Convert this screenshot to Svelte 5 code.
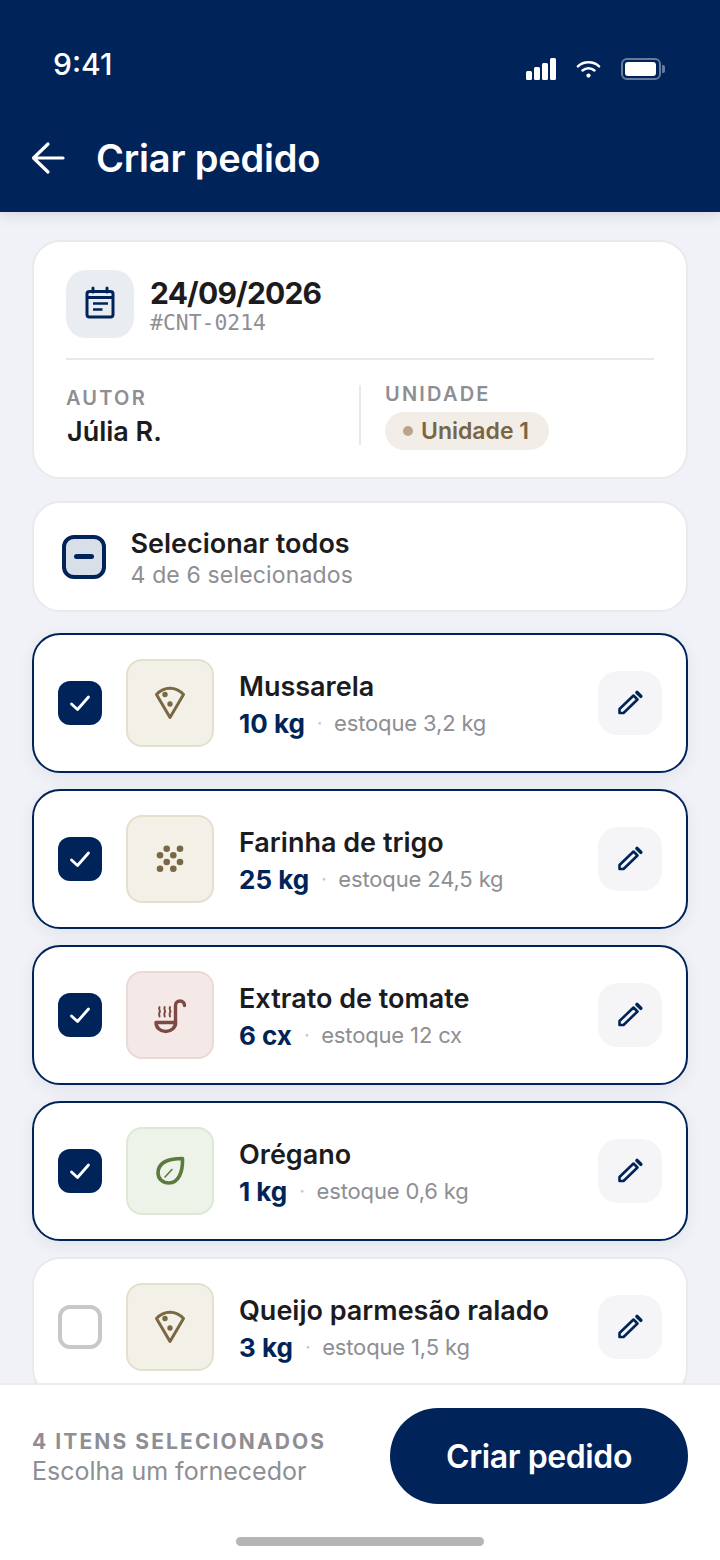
<script>
  const items = [
    { name: "Mussarela", qty: "10 kg", stock: "estoque 3,2 kg", kind: "pizza", tone: "sand", on: true },
    { name: "Farinha de trigo", qty: "25 kg", stock: "estoque 24,5 kg", kind: "grain", tone: "sand", on: true },
    { name: "Extrato de tomate", qty: "6 cx", stock: "estoque 12 cx", kind: "ladle", tone: "rose", on: true },
    { name: "Orégano", qty: "1 kg", stock: "estoque 0,6 kg", kind: "leaf", tone: "green", on: true },
    { name: "Queijo parmesão ralado", qty: "3 kg", stock: "estoque 1,5 kg", kind: "pizza", tone: "sand", on: false },
  ];
  const grains = [
    [40.7, 33.7], [54, 33.7], [34, 40.3], [47.3, 40.3],
    [40.7, 47], [54, 47], [34, 53.7], [47.3, 53.7],
  ];
</script>

<div class="screen">
  <header class="top">
    <div class="status">
      <span class="time">9:41</span>
      <div class="status-icons">
        <svg width="30" height="22" viewBox="0 0 30 22" fill="#fff">
          <rect x="0" y="13" width="6" height="9" rx="1.5" />
          <rect x="8" y="9" width="6" height="13" rx="1.5" />
          <rect x="16" y="5" width="6" height="17" rx="1.5" />
          <rect x="24" y="0" width="6" height="22" rx="1.5" />
        </svg>
        <svg width="25" height="20" viewBox="0 0 26 20" fill="none" stroke="#fff" stroke-width="2.6" stroke-linecap="round">
          <path d="M2 7.2 C8 1.6 18 1.6 24 7.2" />
          <path d="M6.8 11.6 C10.4 8.4 15.6 8.4 19.2 11.6" />
          <circle cx="13" cy="16.8" r="2.2" fill="#fff" stroke="none" />
        </svg>
        <div class="battery"><div class="battery-fill"></div></div>
      </div>
    </div>
    <div class="nav">
      <svg width="34" height="34" viewBox="0 0 34 34" fill="none" stroke="#fff" stroke-width="3.2" stroke-linecap="round" stroke-linejoin="round">
        <path d="M32 17 H3 M17 3 L2.5 17 L17 31" />
      </svg>
      <h1>Criar pedido</h1>
    </div>
  </header>

  <main class="content">
    <section class="card info">
      <div class="info-head">
        <div class="cal">
          <svg width="68" height="68" viewBox="0 0 68 68" fill="none" stroke="#00245a">
            <rect x="21" y="21.5" width="26" height="25.5" rx="2.5" stroke-width="3" />
            <path d="M27 18 V22 M41 18 V22" stroke-width="3" stroke-linecap="round" />
            <path d="M21 27.5 H47" stroke-width="3" />
            <path d="M27 33.5 H42 M27 39.5 H36.5" stroke-width="2.6" />
          </svg>
        </div>
        <div>
          <div class="date">24/09/2026</div>
          <div class="code">#CNT-0214</div>
        </div>
      </div>
      <div class="info-meta">
        <div class="meta-left">
          <div class="label">AUTOR</div>
          <div class="author">Júlia R.</div>
        </div>
        <div class="meta-right">
          <div class="label">UNIDADE</div>
          <div class="pill"><span class="dot"></span>Unidade 1</div>
        </div>
      </div>
    </section>

    <section class="card select-all">
      <div class="check-mixed"><span></span></div>
      <div class="select-text">
        <div class="select-title">Selecionar todos</div>
        <div class="select-sub">4 de 6 selecionados</div>
      </div>
    </section>

    <div class="list">
      {#each items as item}
        <article class="item" class:on={item.on}>
          {#if item.on}
            <div class="check">
              <svg width="44" height="44" viewBox="0 0 44 44" fill="none" stroke="#fff" stroke-width="2.8" stroke-linecap="round" stroke-linejoin="round">
                <path d="M13.5 23 L19.5 28.5 L30.5 16" />
              </svg>
            </div>
          {:else}
            <div class="check-empty"></div>
          {/if}

          <div class="thumb {item.tone}">
            <svg width="84" height="84" viewBox="2 2 84 84" fill="none" stroke="currentColor" stroke-width="3" stroke-linejoin="round" stroke-linecap="round">
              {#if item.kind === "pizza"}
                <path d="M30.5 35.5 C38 27 50 27 57.5 35.5 L44 58.5 Z" />
                <circle cx="39" cy="35.5" r="2.7" fill="currentColor" stroke="none" />
                <circle cx="44" cy="45" r="2.7" fill="currentColor" stroke="none" />
              {:else if item.kind === "grain"}
                {#each grains as g}
                  <circle cx={g[0]} cy={g[1]} r="3.3" fill="currentColor" stroke="none" />
                {/each}
              {:else if item.kind === "ladle"}
                <path d="M49.5 54 V34.5 a4.5 4.5 0 0 1 9 0" stroke-width="3.4" />
                <path d="M30 51.5 H49.5 C49.5 57 45 60.5 39.7 60.5 C34.5 60.5 30 57 30 51.5 Z" stroke-width="3.4" />
                <path d="M33.5 36 c-1.4 2 1.4 3.5 0 5.5 c-1 1.5 0 3 0 4 M38.7 36 c-1.4 2 1.4 3.5 0 5.5 c-1 1.5 0 3 0 4 M44 36 c-1.4 2 1.4 3.5 0 5.5 c-1 1.5 0 3 0 4" stroke-width="2" />
              {:else}
                <path d="M56.5 31.5 C45 31.5 32 34 32 46 C32 52 37 56 43 56 C52 56 57 46 56.5 31.5 Z" stroke-width="3.6" />
                <path d="M39 50 L46 42.5" stroke-width="1.6" />
              {/if}
            </svg>
          </div>

          <div class="item-text">
            <div class="item-name">{item.name}</div>
            <div class="item-line">
              <span class="qty">{item.qty}</span>
              <span class="sep">·</span>
              <span class="stock">{item.stock}</span>
            </div>
          </div>

          <button class="edit" aria-label="Editar">
            <svg width="64" height="64" viewBox="0 0 64 64" fill="none" stroke="#00245a" stroke-width="2.6" stroke-linejoin="round">
              <path d="M21.5 42 V38 L35.5 24.5 L39.5 28.5 L25.5 42 Z" />
              <path d="M39 21.5 L42.8 25.3" stroke-width="3.6" stroke-linecap="round" />
            </svg>
          </button>
        </article>
      {/each}
    </div>
  </main>

  <footer class="bottom">
    <div class="bottom-row">
      <div class="bottom-text">
        <div class="count">4 ITENS SELECIONADOS</div>
        <div class="hint">Escolha um fornecedor</div>
      </div>
      <button class="create">Criar pedido</button>
    </div>
    <div class="home"></div>
  </footer>
</div>

<style>
  :global(body) {
    margin: 0;
    background: #f1f2f7;
  }
  .screen {
    width: 720px;
    height: 1560px;
    display: flex;
    flex-direction: column;
    overflow: hidden;
    background: #f1f2f7;
    font-family: Inter, "Liberation Sans", sans-serif;
    color: #1c1c1e;
  }
  .top {
    height: 212px;
    flex: none;
    background: #00245a;
    color: #fff;
    box-shadow: 0 2px 14px rgba(0, 20, 60, 0.14);
    position: relative;
    z-index: 2;
  }
  .status {
    height: 96px;
    padding: 0 59px 0 53px;
    display: flex;
    justify-content: space-between;
    box-sizing: border-box;
  }
  .time {
    font-size: 30px;
    font-weight: 500;
    line-height: 36px;
    margin-top: 46px;
  }
  .status-icons {
    display: flex;
    align-items: center;
    gap: 20px;
    height: 22px;
    margin-top: 58px;
  }
  .battery {
    width: 40px;
    height: 22px;
    box-sizing: border-box;
    border: 2px solid rgba(255, 255, 255, 0.4);
    border-radius: 6px;
    padding: 2px;
    position: relative;
  }
  .battery::after {
    content: "";
    position: absolute;
    right: -6px;
    top: 5px;
    width: 3px;
    height: 8px;
    border-radius: 0 2px 2px 0;
    background: rgba(255, 255, 255, 0.4);
  }
  .battery-fill {
    width: 31px;
    height: 14px;
    border-radius: 3px;
    background: #fff;
  }
  .nav {
    display: flex;
    align-items: center;
    padding: 28px 0 0 31px;
    gap: 31px;
    height: 68px;
  }
  h1 {
    margin: 0;
    font-size: 38px;
    font-weight: 600;
    letter-spacing: -0.2px;
  }
  .content {
    flex: 1;
    min-height: 0;
    overflow: hidden;
    padding: 28px 32px 0;
    display: flex;
    flex-direction: column;
  }
  .card {
    flex: none;
    background: #fff;
    border: 2px solid #e9e9ee;
    border-radius: 28px;
    box-sizing: border-box;
  }
  .info {
    height: 239px;
    padding: 28px 32px;
    margin-bottom: 22px;
  }
  .info-head {
    display: flex;
    gap: 16px;
    height: 88px;
    border-bottom: 2px solid #e9e9ec;
    box-sizing: content-box;
  }
  .cal {
    width: 68px;
    height: 68px;
    border-radius: 20px;
    background: #e9edf2;
  }
  .date {
    font-size: 30px;
    font-weight: 700;
    line-height: 40px;
    margin-top: 3px;
    letter-spacing: -0.8px;
  }
  .code {
    font-family: "DejaVu Sans Mono", monospace;
    font-size: 21.4px;
    line-height: 19px;
    color: #8e8e93;
  }
  .info-meta {
    display: flex;
    margin-top: 25px;
  }
  .meta-left {
    width: 293px;
    height: 60px;
    border-right: 2px solid #e9e9ec;
    box-sizing: content-box;
  }
  .meta-right {
    padding-left: 24px;
    margin-top: -4px;
  }
  .label {
    font-size: 20px;
    font-weight: 600;
    line-height: 26px;
    letter-spacing: 2.2px;
    color: #8e8e93;
  }
  .author {
    font-size: 27px;
    font-weight: 600;
    line-height: 36px;
    margin: 3px 0 0 1px;
  }
  .pill {
    display: inline-flex;
    align-items: center;
    gap: 8px;
    height: 38px;
    margin-top: 5px;
    padding: 0 20px 0 18px;
    border-radius: 19px;
    background: #f2eee7;
    color: #7a6545;
    font-size: 23px;
    font-weight: 600;
  }
  .dot {
    width: 10px;
    height: 10px;
    border-radius: 50%;
    background: #b9a48c;
  }
  .select-all {
    height: 111px;
    display: flex;
    align-items: center;
    gap: 24.5px;
    padding-left: 28px;
    margin-bottom: 21px;
  }
  .select-text {
    padding-top: 2px;
  }
  .check-mixed {
    width: 44px;
    height: 44px;
    box-sizing: border-box;
    border: 4px solid #00245a;
    border-radius: 12px;
    background: #d9dfe8;
    display: flex;
    align-items: center;
    justify-content: center;
  }
  .check-mixed span {
    width: 20px;
    height: 5px;
    border-radius: 2.5px;
    background: #00245a;
  }
  .select-title {
    font-size: 27px;
    font-weight: 600;
    line-height: 34px;
  }
  .select-sub {
    font-size: 23px;
    letter-spacing: 0.15px;
    line-height: 28px;
    color: #8e8e93;
  }
  .list {
    display: flex;
    flex-direction: column;
    gap: 16px;
  }
  .item {
    flex: none;
    height: 140px;
    box-sizing: border-box;
    background: #fff;
    border: 2px solid #e9e9ee;
    border-radius: 28px;
    display: flex;
    align-items: center;
    padding: 0 24px;
  }
  .item.on {
    border-color: #00245a;
    box-shadow: 0 4px 16px rgba(0, 36, 90, 0.07);
  }
  .check,
  .check-empty {
    width: 44px;
    height: 44px;
    flex: none;
    box-sizing: border-box;
    border-radius: 12px;
  }
  .check {
    background: #00245a;
  }
  .check-empty {
    border: 4px solid #c7c7cc;
  }
  .thumb {
    width: 88px;
    height: 88px;
    flex: none;
    box-sizing: border-box;
    margin: 0 25px 0 24px;
    border: 2px solid;
    border-radius: 16px;
    display: flex;
  }
  .sand {
    background: #f3f0e7;
    border-color: #e5dfcd;
    color: #7a6845;
  }
  .rose {
    background: #f5e9e8;
    border-color: #e9dad6;
    color: #7c4a42;
  }
  .green {
    background: #edf3e9;
    border-color: #dde8d6;
    color: #5b7a3d;
  }
  .item-text {
    flex: 1;
    min-width: 0;
    padding-top: 5px;
  }
  .item-name {
    font-size: 27px;
    font-weight: 600;
    line-height: 36px;
    white-space: nowrap;
  }
  .item-line {
    display: flex;
    align-items: center;
    line-height: 37px;
  }
  .qty {
    font-size: 26px;
    font-weight: 700;
    color: #00245a;
  }
  .sep {
    margin: 0 11.5px 0 12px;
    font-size: 20px;
    color: #c7c7cc;
  }
  .stock {
    font-size: 22px;
    letter-spacing: -0.15px;
    color: #8e8e93;
  }
  .edit {
    width: 64px;
    height: 64px;
    flex: none;
    padding: 0;
    border: none;
    border-radius: 20px;
    background: #f5f5f7;
  }
  .edit svg {
    display: block;
  }
  .bottom {
    height: 177px;
    flex: none;
    box-sizing: border-box;
    background: #fff;
    border-top: 2px solid #ebebed;
    position: relative;
    z-index: 1;
  }
  .bottom-row {
    display: flex;
    justify-content: space-between;
    align-items: center;
    padding: 23px 32px 0 32px;
  }
  .bottom-text {
    padding-top: 4px;
  }
  .count {
    font-size: 21px;
    font-weight: 700;
    line-height: 26px;
    letter-spacing: 2.1px;
    color: #8e8e93;
  }
  .hint {
    font-size: 25px;
    line-height: 32px;
    color: #8e8e93;
  }
  .create {
    width: 298px;
    height: 96px;
    border: none;
    border-radius: 48px;
    background: #00245a;
    color: #fff;
    font-family: inherit;
    font-size: 32px;
    font-weight: 600;
    letter-spacing: -0.4px;
  }
  .home {
    width: 248px;
    height: 9px;
    margin: 33px auto 0;
    border-radius: 5px;
    background: #b5b5b5;
  }
</style>
